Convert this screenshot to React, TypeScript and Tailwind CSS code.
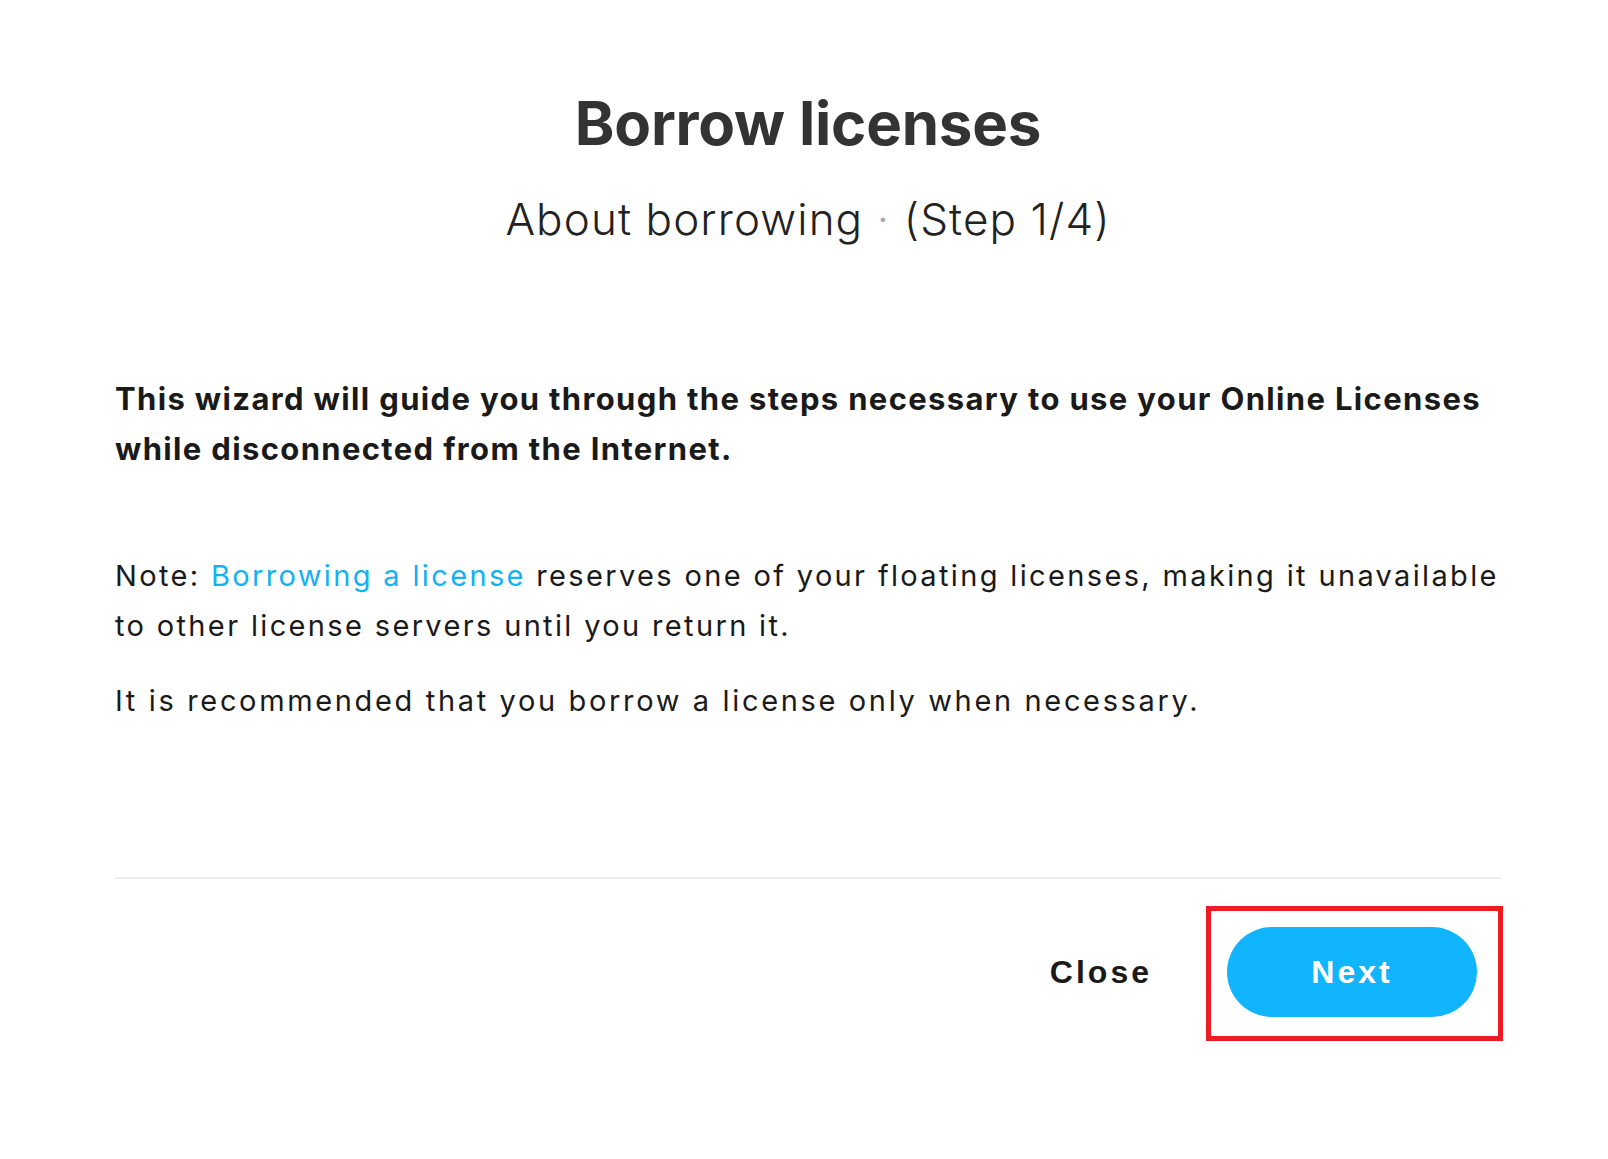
import React from "react";

export default function App() {
  const font = { fontFamily: "Inter, 'Noto Sans', sans-serif" } as React.CSSProperties;
  const btnFont = { fontFamily: "'Liberation Sans', Arial, sans-serif" } as React.CSSProperties;
  return (
    <div className="w-[1608px] h-[1159px] bg-white" style={font}>
      <div className="pl-[115px] pr-[107px] pt-[87px] flex flex-col">
        <h1 className="text-center text-[60px] leading-[72px] font-bold text-[#333333] tracking-[-0.2px]">
          Borrow licenses
        </h1>
        <h2 className="mt-[32px] text-center text-[44px] leading-[56px] font-light text-[#222222] tracking-[1.1px]">
          About borrowing <span className="text-[#aaaaaa]">·</span> (Step 1/4)
        </h2>
        <p className="mt-[127px] text-[31px] leading-[50px] font-bold text-[#1a1a1a] tracking-[1.35px] whitespace-nowrap">
          This wizard will guide you through the steps necessary to use your Online Licenses
          <br />
          while disconnected from the Internet.
        </p>
        <p className="mt-[77px] text-[29px] leading-[50px] font-normal text-[#1a1a1a] tracking-[2.35px] whitespace-nowrap">
          Note: <span className="text-[#14b1f3]">Borrowing a license</span> reserves one of your floating licenses, making it unavailable
          <br />
          to other license servers until you return it.
        </p>
        <p className="mt-[25px] text-[29px] leading-[50px] font-normal text-[#1a1a1a] tracking-[2.65px] whitespace-nowrap">
          It is recommended that you borrow a license only when necessary.
        </p>
        <div className="mt-[151px] h-[2px] bg-[#ededed]" />
        <div className="mt-[27px] flex items-center justify-end mr-[-2px]">
          <button
            className="text-[32px] font-bold text-[#1a1a1a] tracking-[3px] mr-[54px] pb-[4px]"
            style={btnFont}
          >
            Close
          </button>
          <div className="border-[5px] border-[#ed1c24] pl-[16px] pr-[21px] pt-[16px] pb-[19px]">
            <button
              className="w-[250px] h-[90px] rounded-full bg-[#10b5fd] text-white text-[32px] font-bold tracking-[3px] flex items-center justify-center"
              style={btnFont}
            >
              Next
            </button>
          </div>
        </div>
      </div>
    </div>
  );
}
